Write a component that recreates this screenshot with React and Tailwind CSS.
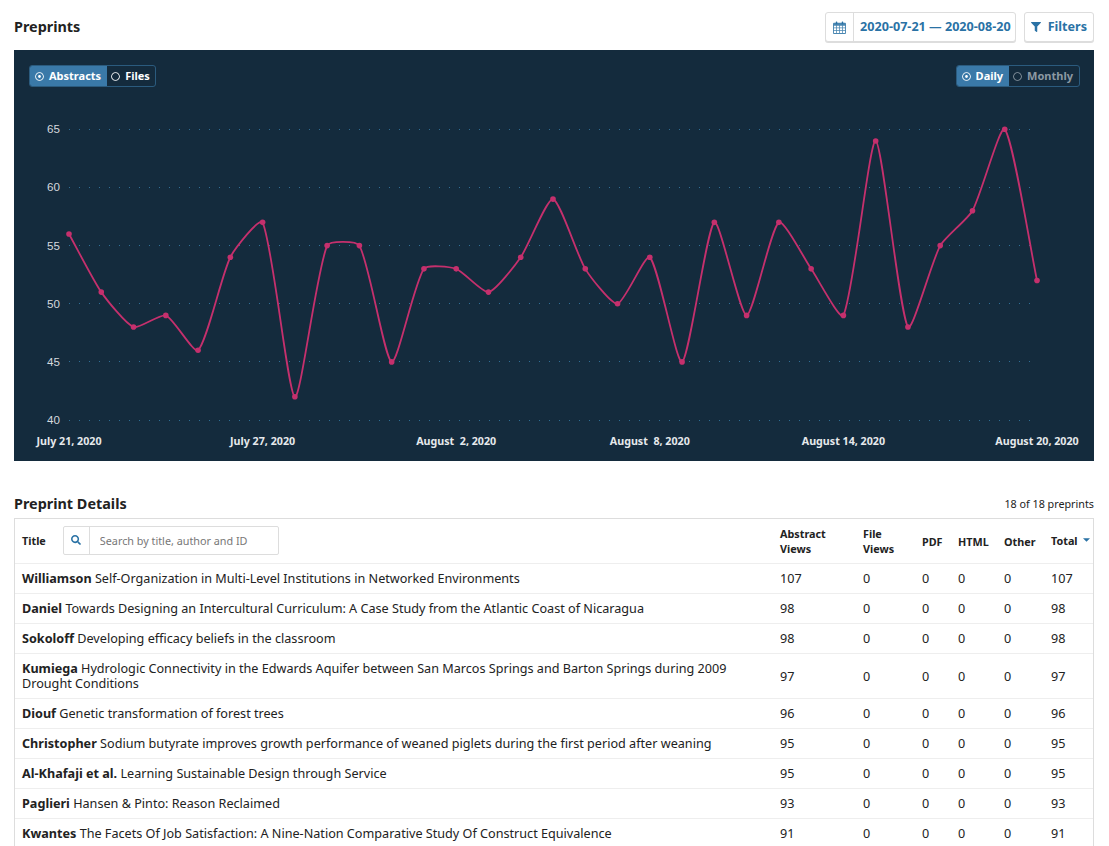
import React from "react";
import { FaFilter, FaSearch, FaRegDotCircle, FaRegCircle } from "react-icons/fa";

const values = [56, 51, 48, 49, 46, 54, 57, 42, 55, 55, 45, 53, 53, 51, 54, 59, 53, 50, 54, 45, 57, 49, 57, 53, 49, 64, 48, 55, 58, 65, 52];
const ticks = [65, 60, 55, 50, 45, 40];
const dates = [
  ["July 21, 2020", 0],
  ["July 27, 2020", 6],
  ["August  2, 2020", 12],
  ["August  8, 2020", 18],
  ["August 14, 2020", 24],
  ["August 20, 2020", 30],
];

const xAt = (i) => 69 + i * 32.267;
const yAt = (v) => 129.3 + (65 - v) * 11.63;
const points = values.map((v, i) => ({ x: xAt(i), y: yAt(v) }));

// same curve the chart lib draws, with distance weighted control points
function splinePath(pts, t = 0.2) {
  const controls = pts.map((cur, i) => {
    const prev = pts[i - 1] || cur;
    const next = pts[i + 1] || cur;
    const d01 = Math.hypot(cur.x - prev.x, cur.y - prev.y);
    const d12 = Math.hypot(next.x - cur.x, next.y - cur.y);
    const fa = (t * d01) / (d01 + d12);
    const fb = (t * d12) / (d01 + d12);
    return {
      inX: cur.x - fa * (next.x - prev.x),
      inY: cur.y - fa * (next.y - prev.y),
      outX: cur.x + fb * (next.x - prev.x),
      outY: cur.y + fb * (next.y - prev.y),
    };
  });
  let d = `M${pts[0].x} ${pts[0].y}`;
  for (let i = 1; i < pts.length; i++) {
    d += ` C${controls[i - 1].outX} ${controls[i - 1].outY} ${controls[i].inX} ${controls[i].inY} ${pts[i].x} ${pts[i].y}`;
  }
  return d;
}

const rows = [
  ["Williamson", "Self-Organization in Multi-Level Institutions in Networked Environments", 107],
  ["Daniel", "Towards Designing an Intercultural Curriculum: A Case Study from the Atlantic Coast of Nicaragua", 98],
  ["Sokoloff", "Developing efficacy beliefs in the classroom", 98],
  ["Kumiega", "Hydrologic Connectivity in the Edwards Aquifer between San Marcos Springs and Barton Springs during 2009 Drought Conditions", 97],
  ["Diouf", "Genetic transformation of forest trees", 96],
  ["Christopher", "Sodium butyrate improves growth performance of weaned piglets during the first period after weaning", 95],
  ["Al-Khafaji et al.", "Learning Sustainable Design through Service", 95],
  ["Paglieri", "Hansen & Pinto: Reason Reclaimed", 93],
  ["Kwantes", "The Facets Of Job Satisfaction: A Nine-Nation Comparative Study Of Construct Equivalence", 91],
];

function CalendarIcon() {
  return (
    <svg viewBox="0 0 14 14" className="w-[13px] h-[13px] text-[#2a72a5]" fill="currentColor">
      <path d="M1 2h12a1 1 0 0 1 1 1v10a1 1 0 0 1-1 1H1a1 1 0 0 1-1-1V3a1 1 0 0 1 1-1Z" opacity="0.85" />
      <rect x="3" y="0.5" width="1.6" height="3" rx="0.6" />
      <rect x="9.4" y="0.5" width="1.6" height="3" rx="0.6" />
      <path d="M1 5h2.5v2H1zM4.3 5h2.3v2H4.3zM7.4 5h2.3v2H7.4zM10.5 5H13v2h-2.5zM1 7.8h2.5v2H1zM4.3 7.8h2.3v2H4.3zM7.4 7.8h2.3v2H7.4zM10.5 7.8H13v2h-2.5zM1 10.6h2.5V13H1zM4.3 10.6h2.3V13H4.3zM7.4 10.6h2.3V13H7.4zM10.5 10.6H13V13h-2.5z" fill="#fff" />
    </svg>
  );
}

function Toggle({ options }) {
  return (
    <div className="flex h-[22px] rounded-[3px] overflow-hidden border border-[#2b5b7e] text-[11px] font-bold leading-[20px]">
      {options.map((o) => (
        <div
          key={o.label}
          className={
            o.active
              ? "flex items-center gap-[5px] pl-[5px] pr-[6px] bg-[#3a79a8] text-white"
              : `flex items-center gap-[5px] pl-[4px] ${o.muted ? "pr-[6px] text-[#8c99a3]" : "pr-[5px] text-white"}`
          }
        >
          {o.active ? <FaRegDotCircle className="w-[9px] h-[9px]" /> : <FaRegCircle className="w-[9px] h-[9px]" />}
          <span>{o.label}</span>
        </div>
      ))}
    </div>
  );
}

function Chart() {
  return (
    <svg viewBox="14 87 1080 374" className="block w-[1080px] h-[374px]">
      {ticks.map((t) => (
        <g key={t}>
          <line
            x1="69"
            x2="1037"
            y1={Math.floor(yAt(t)) + 0.5}
            y2={Math.floor(yAt(t)) + 0.5}
            stroke="#2f6f96"
            strokeWidth="1"
            strokeDasharray="1 9"
          />
          <text
            x="60"
            y={yAt(t) + 4}
            textAnchor="end"
            fill="#d4d9dd"
            fontSize="11.6"
            fontFamily="'Liberation Sans', Arial, sans-serif"
          >
            {t}
          </text>
        </g>
      ))}
      <path d={splinePath(points)} fill="none" stroke="#c5306d" strokeWidth="1.8" />
      {points.map((p, i) => (
        <circle key={i} cx={p.x} cy={p.y} r="2.8" fill="#c5306d" />
      ))}
      {dates.map(([label, i]) => (
        <text
          key={label}
          x={xAt(i)}
          y="445"
          textAnchor="middle"
          fill="#e6e9ec"
          fontSize="10.7"
          fontWeight="700"
          className="whitespace-pre"
        >
          {label}
        </text>
      ))}
    </svg>
  );
}

const th = "border-b border-[#eee] px-2 text-left text-[10.8px] leading-[15px] font-bold text-[#222] align-middle";
const td = "border-b border-[#eee] px-2 py-[7px] text-[12.63px] leading-[15px] text-[#222] align-middle";

export default function App() {
  return (
    <div className="h-[846px] overflow-hidden bg-white pl-[14px] pr-[15px] pt-[12px] text-[#222] font-['Noto_Sans','Open_Sans',sans-serif]">
      <div className="flex items-center justify-between h-[30px]">
        <h1 className="text-[14.4px] font-bold leading-[30px]">Preprints</h1>
        <div className="flex gap-2">
          <div className="flex h-[30px] rounded-[3px] border border-[#ddd] shadow-[0_1px_0_#ddd] bg-white">
            <div className="flex w-[28px] items-center justify-center border-r border-[#ddd]">
              <CalendarIcon />
            </div>
            <div className="flex items-center pl-[6px] pr-[4px] text-[12.6px] font-bold text-[#2a72a5]">2020-07-21 — 2020-08-20</div>
          </div>
          <div className="flex h-[30px] items-center gap-[7px] rounded-[3px] border border-[#ddd] shadow-[0_1px_0_#ddd] bg-white px-[6px] text-[12.6px] font-bold text-[#2a72a5]">
            <FaFilter className="w-[10px] h-[10px]" />
            <span>Filters</span>
          </div>
        </div>
      </div>

      <div className="mt-[8px] bg-[#142b3d]">
        <div className="flex justify-between pl-[15px] pr-[14px] pt-[15px]">
          <Toggle options={[{ label: "Abstracts", active: true }, { label: "Files" }]} />
          <Toggle options={[{ label: "Daily", active: true }, { label: "Monthly", muted: true }]} />
        </div>
        <Chart />
      </div>

      <div className="mt-[32px] flex items-center justify-between h-[22px]">
        <h2 className="text-[14.4px] font-bold leading-[22px]">Preprint Details</h2>
        <span className="text-[10.75px] text-[#222]">18 of 18 preprints</span>
      </div>

      <div className="mt-[3px] border-t border-x border-[#ddd]">
        <table className="w-full table-fixed border-separate border-spacing-0">
          <colgroup>
            <col className="w-[757px]" />
            <col className="w-[83px]" />
            <col className="w-[59px]" />
            <col className="w-[36px]" />
            <col className="w-[46px]" />
            <col className="w-[47px]" />
            <col />
          </colgroup>
          <thead>
            <tr className="h-[45px]">
              <th className={`${th} pl-[7px]`}>
                <div className="mb-[2px] flex items-center gap-[17px]">
                  <span>Title</span>
                  <div className="flex h-[29px] w-[216px] rounded-[2px] border border-[#ddd]">
                    <div className="flex w-[26px] items-center justify-center border-r border-[#ddd]">
                      <FaSearch className="w-[10px] h-[10px] text-[#2a72a5]" />
                    </div>
                    <input
                      readOnly
                      placeholder="Search by title, author and ID"
                      className="min-w-0 flex-1 pl-[10px] text-[10.8px] font-normal outline-none placeholder:text-[#777]"
                    />
                  </div>
                </div>
              </th>
              <th className={th}>Abstract Views</th>
              <th className={th}>File Views</th>
              <th className={th}>PDF</th>
              <th className={th}>HTML</th>
              <th className={th}>Other</th>
              <th className={`${th} pr-0`}>
                <div className="mb-[2px] flex items-center gap-[5px]">
                  Total
                  <svg viewBox="0 0 8 4" className="w-[7px] h-[4px] shrink-0 text-[#2a72a5]" fill="currentColor">
                    <path d="M0 0h8L4 4Z" />
                  </svg>
                </div>
              </th>
            </tr>
          </thead>
          <tbody>
            {rows.map(([author, title, total]) => (
              <tr key={author}>
                <td className={`${td} pl-[7px]`}>
                  <b>{author}</b> {title}
                </td>
                <td className={td}>{total}</td>
                <td className={td}>0</td>
                <td className={td}>0</td>
                <td className={td}>0</td>
                <td className={td}>0</td>
                <td className={td}>{total}</td>
              </tr>
            ))}
          </tbody>
        </table>
      </div>
    </div>
  );
}
